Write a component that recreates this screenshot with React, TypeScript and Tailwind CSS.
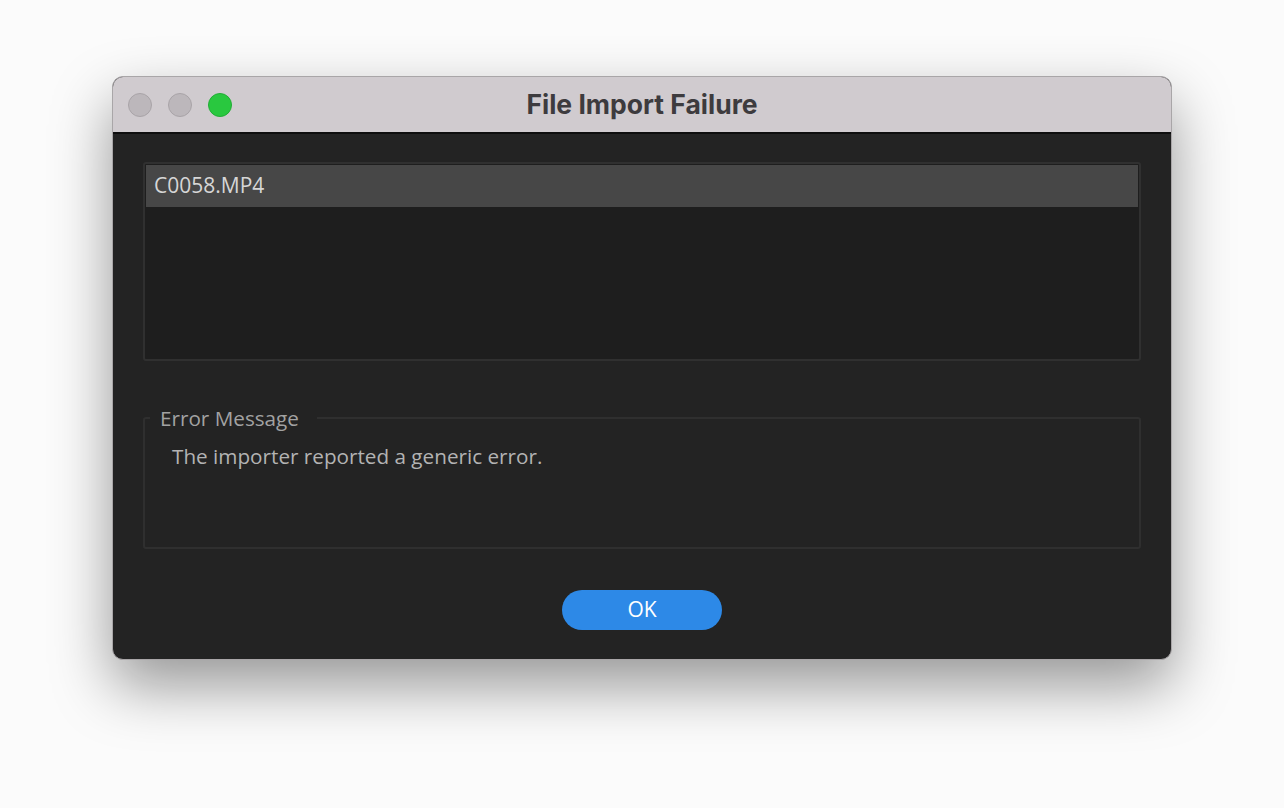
export default function App() {
  return (
    <div className="min-h-screen w-full bg-[#fbfbfb] flex justify-center pt-[76px]">
      <div className="w-[1060px] h-[584px] rounded-[11px] overflow-hidden flex flex-col bg-[#232323] shadow-[0_26px_60px_rgba(0,0,0,0.4)] border border-[#a9a6a8]">
        {/* title bar */}
        <div className="relative h-[57px] shrink-0 bg-[#d0cbcf] border-b-2 border-[#0e0e0e] flex items-center px-[15px] gap-[16px]">
          <span className="w-[24px] h-[24px] rounded-full bg-[#bcb7bb] border border-[#a9a4a8]" />
          <span className="w-[24px] h-[24px] rounded-full bg-[#bcb7bb] border border-[#a9a4a8]" />
          <span className="w-[24px] h-[24px] rounded-full bg-[#29c83f] border border-[#22ad36]" />
          <div className="absolute inset-0 flex items-center justify-center pointer-events-none">
            <span className="text-[26.5px] font-bold text-[#3d3b3e] font-['Inter','Liberation_Sans',sans-serif]">
              File Import Failure
            </span>
          </div>
        </div>

        {/* body */}
        <div className="flex-1 flex flex-col px-[30px] pt-[28px] font-['Open_Sans','Noto_Sans',sans-serif]">
          <div className="h-[199px] rounded-[3px] border-2 border-[#303030] bg-[#1e1e1e] p-[1px]">
            <div className="h-[42px] bg-[#474747] flex items-center px-[8px] text-[21px] text-[#d6d6d6]">
              C0058.MP4
            </div>
          </div>

          <fieldset className="mt-[47px] h-[141px] rounded-[3px] border-2 border-[#2f2f2f] px-[5px]">
            <legend className="pl-[10px] pr-[18px] text-[20.7px] text-[#a2a2a2] leading-none">
              Error Message
            </legend>
            <p className="mt-[12px] ml-[22px] text-[20.7px] text-[#b3b3b3]">
              The importer reported a generic error.
            </p>
          </fieldset>

          <div className="flex justify-center mt-[41px]">
            <button className="w-[160px] h-[40px] rounded-full bg-[#2d89e7] text-white text-[21px]">
              OK
            </button>
          </div>
        </div>
      </div>
    </div>
  );
}
